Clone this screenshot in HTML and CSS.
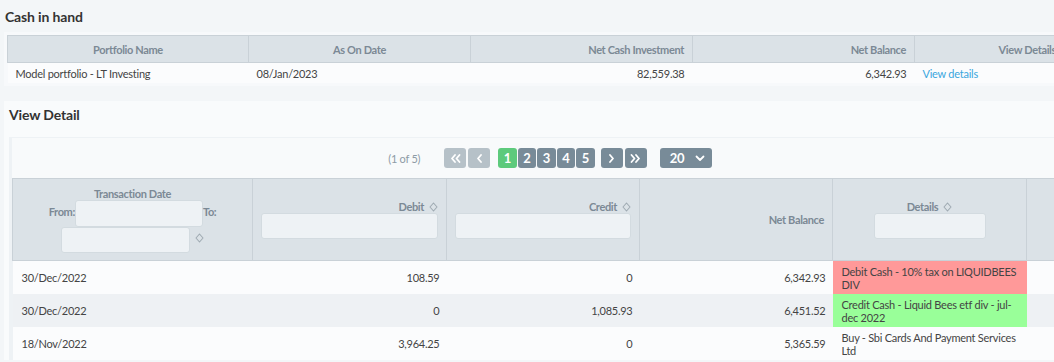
FILE: index.html
```html
<!DOCTYPE html>
<html lang="en">
<head>
    <meta charset="UTF-8">
    <title>Cash in hand</title>
    <link rel="stylesheet" href="styles.css">
</head>
<body>
    <div class="cash">
        <h2 class="title">Cash in hand</h2>
        <div class="panel">
            <table class="grid summary">
                <colgroup>
                    <col style="width: 241px">
                    <col style="width: 222px">
                    <col style="width: 222px">
                    <col style="width: 222px">
                    <col style="width: 150px">
                </colgroup>
                <thead>
                    <tr>
                        <th class="center">Portfolio Name</th>
                        <th class="center">As On Date</th>
                        <th class="right">Net Cash Investment</th>
                        <th class="right">Net Balance</th>
                        <th class="right">View Details</th>
                    </tr>
                </thead>
                <tbody>
                    <tr>
                        <td>Model portfolio - LT Investing</td>
                        <td>08/Jan/2023</td>
                        <td class="right">82,559.38</td>
                        <td class="right">6,342.93</td>
                        <td><a class="link" href="#">View details</a></td>
                    </tr>
                </tbody>
            </table>
        </div>
    </div>

    <div class="detail">
        <h2 class="title">View Detail</h2>
        <div class="datatable">
            <div class="paginator">
                <span class="pg-count">(1 of 5)</span>
                <span class="pg-btn nav off first">
                    <svg width="11" height="9" viewBox="0 0 11 9"><path d="M5 1L2 4.5 5 8M9.5 1L6.5 4.5 9.5 8" fill="none" stroke="#fff" stroke-width="1.8" stroke-linecap="round" stroke-linejoin="round"/></svg>
                </span>
                <span class="pg-btn nav off">
                    <svg width="7" height="9" viewBox="0 0 7 9"><path d="M5 1L2 4.5 5 8" fill="none" stroke="#fff" stroke-width="1.8" stroke-linecap="round" stroke-linejoin="round"/></svg>
                </span>
                <span class="pages">
                    <span class="pg-btn page active">1</span>
                    <span class="pg-btn page">2</span>
                    <span class="pg-btn page">3</span>
                    <span class="pg-btn page">4</span>
                    <span class="pg-btn page">5</span>
                </span>
                <span class="pg-btn nav next">
                    <svg width="7" height="9" viewBox="0 0 7 9"><path d="M2 1L5 4.5 2 8" fill="none" stroke="#fff" stroke-width="1.8" stroke-linecap="round" stroke-linejoin="round"/></svg>
                </span>
                <span class="pg-btn nav">
                    <svg width="11" height="9" viewBox="0 0 11 9"><path d="M1.5 1L4.5 4.5 1.5 8M6 1L9 4.5 6 8" fill="none" stroke="#fff" stroke-width="1.8" stroke-linecap="round" stroke-linejoin="round"/></svg>
                </span>
                <span class="pg-select">
                    20
                    <svg width="10" height="7" viewBox="0 0 10 7"><path d="M1.5 1.5L5 5 8.5 1.5" fill="none" stroke="#fff" stroke-width="1.8" stroke-linecap="round" stroke-linejoin="round"/></svg>
                </span>
            </div>

            <table class="grid ledger">
                <colgroup>
                    <col style="width: 240px">
                    <col style="width: 194px">
                    <col style="width: 193px">
                    <col style="width: 193px">
                    <col style="width: 194px">
                    <col style="width: 62px">
                </colgroup>
                <thead>
                    <tr>
                        <th class="center">
                            <div class="label">Transaction Date</div>
                            <div class="range">From:<input class="filter from" type="text">To:</div>
                            <div class="range"><input class="filter to" type="text"><svg class="sort" width="9" height="10" viewBox="0 0 9 10"><path d="M4.5 1L8 5 4.5 9 1 5Z" fill="none" stroke="#a0abb3" stroke-width="1.1" stroke-linejoin="round"/></svg></div>
                        </th>
                        <th class="right">
                            <div class="label">Debit<svg class="sort" width="9" height="10" viewBox="0 0 9 10"><path d="M4.5 1L8 5 4.5 9 1 5Z" fill="none" stroke="#a0abb3" stroke-width="1.1" stroke-linejoin="round"/></svg></div>
                            <input class="filter wide" type="text">
                        </th>
                        <th class="right">
                            <div class="label">Credit<svg class="sort" width="9" height="10" viewBox="0 0 9 10"><path d="M4.5 1L8 5 4.5 9 1 5Z" fill="none" stroke="#a0abb3" stroke-width="1.1" stroke-linejoin="round"/></svg></div>
                            <input class="filter wide" type="text">
                        </th>
                        <th class="right">Net Balance</th>
                        <th class="center">
                            <div class="label">Details<svg class="sort" width="9" height="10" viewBox="0 0 9 10"><path d="M4.5 1L8 5 4.5 9 1 5Z" fill="none" stroke="#a0abb3" stroke-width="1.1" stroke-linejoin="round"/></svg></div>
                            <input class="filter short" type="text">
                        </th>
                        <th></th>
                    </tr>
                </thead>
                <tbody>
                    <tr>
                        <td>30/Dec/2022</td>
                        <td class="right">108.59</td>
                        <td class="right">0</td>
                        <td class="right">6,342.93</td>
                        <td class="note debit">Debit Cash - 10% tax on LIQUIDBEES DIV</td>
                        <td></td>
                    </tr>
                    <tr class="odd">
                        <td>30/Dec/2022</td>
                        <td class="right">0</td>
                        <td class="right">1,085.93</td>
                        <td class="right">6,451.52</td>
                        <td class="note credit">Credit Cash - Liquid Bees etf div - jul-dec 2022</td>
                        <td></td>
                    </tr>
                    <tr>
                        <td>18/Nov/2022</td>
                        <td class="right">3,964.25</td>
                        <td class="right">0</td>
                        <td class="right">5,365.59</td>
                        <td class="note">Buy - Sbi Cards And Payment Services Ltd</td>
                        <td></td>
                    </tr>
                </tbody>
            </table>
        </div>
    </div>
</body>
</html>
```

FILE: styles.css
```css
html, body {
    overflow: hidden;
}
body {
    margin: 0;
    padding-top: 8px;
    background-color: #f3f6f8;
    color: #444;
    font-family: Lato, "Open Sans", sans-serif;
    font-size: 11px;
    letter-spacing: -0.25px;
}
.title {
    margin: 0 0 7px 5px;
    font-size: 14px;
    line-height: 17px;
    font-weight: bold;
    color: #333;
    letter-spacing: -0.15px;
}
.panel {
    width: 1100px;
    margin-left: 4px;
    padding: 3px 0 3px 3px;
    background-color: #f7f9fb;
}
.grid {
    border-collapse: collapse;
    table-layout: fixed;
}
.grid th {
    background-color: #dbe2e7;
    color: #7b8995;
    font-weight: bold;
    letter-spacing: -0.35px;
    border: 1px solid #c9d1d7;
    padding: 0 8px;
    vertical-align: middle;
}
.grid td {
    padding: 0 8px;
}
.center {
    text-align: center;
}
.right {
    text-align: right;
}
.summary {
    width: 1057px;
}
.summary th {
    height: 26px;
}
.summary td {
    height: 20px;
    background-color: #fbfcfd;
}
.link {
    color: #3aa6dd;
    text-decoration: none;
}

.detail {
    width: 1100px;
    margin: 15px 0 0 4px;
    padding: 5px 0 0 5px;
    background-color: #f9fbfc;
}
.detail .title {
    margin: 0 0 14px 0;
}
.datatable {
    padding: 1px 0 0 3px;
    background-color: #eef2f5;
}
.paginator {
    width: 1076px;
    height: 40px;
    display: flex;
    align-items: center;
    justify-content: center;
    background-color: #f8fafb;
}
.pg-count {
    color: #8d9ba6;
    margin-right: 24px;
}
.pg-btn {
    height: 20px;
    display: inline-flex;
    align-items: center;
    justify-content: center;
    border-radius: 3px;
    background-color: #788b98;
    color: white;
    font-size: 13px;
    font-weight: bold;
}
.nav {
    width: 22px;
    margin-right: 2px;
}
.nav.off {
    background-color: #b6c1c8;
}
.pages {
    display: flex;
    gap: 1px;
    margin: 0 6px;
}
.page {
    width: 18.5px;
}
.page.active {
    background-color: #5dca7c;
}
.pg-select {
    width: 52px;
    height: 20px;
    box-sizing: border-box;
    margin-left: 11px;
    padding: 0 7px 0 10px;
    display: inline-flex;
    align-items: center;
    justify-content: space-between;
    border-radius: 3px;
    background-color: #788b98;
    color: white;
    font-size: 13px;
    font-weight: bold;
}

.ledger {
    width: 1076px;
}
.ledger th {
    height: 81px;
}
.ledger .label {
    line-height: 13px;
}
.sort {
    margin-left: 5px;
    vertical-align: -1px;
}
.filter {
    box-sizing: border-box;
    height: 26px;
    margin: 0;
    border: 1px solid #d3dbe0;
    border-radius: 3px;
    background-color: #eef2f5;
    vertical-align: middle;
}
.filter.from {
    width: 128px;
    height: 27px;
}
.filter.to {
    width: 129px;
}
.range {
    line-height: 13px;
}
.filter.wide {
    width: 100%;
}
.filter.short {
    width: 112px;
}
.ledger td {
    height: 33px;
    padding: 0 7px 0 9px;
    line-height: 13px;
    background-color: #fbfcfd;
}
.ledger td.right {
    padding-right: 7px;
}
.ledger tr.odd td {
    background-color: #eef1f4;
}
.ledger td.note {
    padding-right: 2px;
}
.ledger tr td.debit {
    background-color: #ff9999;
}
.ledger tr td.credit {
    background-color: #99ff99;
}
```
